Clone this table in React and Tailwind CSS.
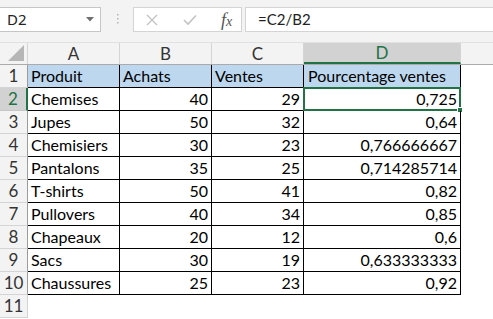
import React from "react";

const rows = [
  ["Chemises", 40, 29, "0,725"],
  ["Jupes", 50, 32, "0,64"],
  ["Chemisiers", 30, 23, "0,766666667"],
  ["Pantalons", 35, 25, "0,714285714"],
  ["T-shirts", 50, 41, "0,82"],
  ["Pullovers", 40, 34, "0,85"],
  ["Chapeaux", 20, 12, "0,6"],
  ["Sacs", 30, 19, "0,633333333"],
  ["Chaussures", 25, 23, "0,92"],
];

function TopBar() {
  return (
    <div className="flex items-start pt-[7px] h-[43px] border-b border-[#e1e1e1]">
      <div className="w-[101px] h-[25px] bg-white border border-l-0 border-[#c6c6c6] flex items-center justify-between pl-[7px] pr-[6px]">
        <span className="text-[15px] text-[#222] font-['Noto_Sans',sans-serif] leading-none">D2</span>
        <svg width="8" height="5" viewBox="0 0 8 5">
          <path d="M0 0 H8 L4 4.5 Z" fill="#6f6f6f" />
        </svg>
      </div>
      <div className="w-[32px] h-[25px] flex items-center justify-center">
        <svg width="3" height="12" viewBox="0 0 3 12">
          <rect x="1" y="0" width="1.5" height="1.5" fill="#b5b5b5" />
          <rect x="1" y="4" width="1.5" height="1.5" fill="#b5b5b5" />
          <rect x="1" y="8" width="1.5" height="1.5" fill="#b5b5b5" />
        </svg>
      </div>
      <div className="w-[109px] h-[25px] bg-white border border-[#d4d4d4] flex items-center">
        <svg className="ml-[12px]" width="12" height="12" viewBox="0 0 12 12">
          <path d="M1 1 L11 11 M11 1 L1 11" stroke="#c3c3c3" strokeWidth="1.4" />
        </svg>
        <svg className="ml-[25px]" width="14" height="12" viewBox="0 0 14 12">
          <path d="M1 6 L5 10 L13 1.5" stroke="#c3c3c3" strokeWidth="1.6" fill="none" />
        </svg>
        <span className="ml-[24px] font-['Liberation_Serif',serif] italic text-[#555] text-[18px] leading-none">
          f<span className="text-[14px]">x</span>
        </span>
      </div>
      <div className="ml-[3px] flex-1 h-[25px] bg-white border border-r-0 border-[#d4d4d4] flex items-center pl-[12px]">
        <span className="text-[15px] text-[#222] font-['Lato',sans-serif]">=C2/B2</span>
      </div>
    </div>
  );
}

function HeaderRow() {
  const cols = [
    ["A", "w-[92px]", false],
    ["B", "w-[92px]", false],
    ["C", "w-[92px]", false],
    ["D", "w-[157px]", true],
  ];
  return (
    <div className="flex h-[22px] border-b border-[#ababab]">
      <div className="w-[28px] h-full border-r border-[#d4d4d4] flex items-end justify-end pr-[3px] pb-[3px]">
        <svg width="16" height="16" viewBox="0 0 16 16">
          <path d="M16 0 V16 H0 Z" fill="#b6b6b6" />
        </svg>
      </div>
      {cols.map(([l, w, sel]) => (
        <div
          key={l}
          className={`${w} h-full flex items-center justify-center border-r border-[#d4d4d4] text-[17px] ${
            sel ? "bg-[#d2d2d2] text-[#217346] border-b-2 border-b-[#217346]" : "text-[#333]"
          }`}
        >
          {l}
        </div>
      ))}
      <div className="flex-1" />
    </div>
  );
}

function RowHead({ n, sel, last }) {
  return (
    <div
      className={`w-[28px] h-full flex items-center justify-center text-[17px] border-b ${
        sel
          ? "bg-[#d2d2d2] text-[#217346] border-r-2 border-r-[#217346] border-b-[#c6c6c6]"
          : "bg-[#f3f3f3] text-[#333] border-r border-r-[#9c9c9c] border-b-[#d4d4d4]"
      } ${last ? "border-r-[#d4d4d4]" : ""}`}
    >
      {n}
    </div>
  );
}

export default function App() {
  return (
    <div className="w-[493px] h-[319px] overflow-hidden bg-white font-['Lato',sans-serif] select-none">
      <div className="bg-[#f3f3f3]">
        <TopBar />
        <HeaderRow />
      </div>

      <div className="flex h-[23px]">
        <RowHead n={1} />
        <div className="flex bg-[#bdd7ee] border-b border-black text-[16px] text-black">
          <div className="w-[92px] border-r border-black pl-[3px] flex items-center">Produit</div>
          <div className="w-[92px] border-r border-black pl-[3px] flex items-center">Achats</div>
          <div className="w-[92px] border-r border-black pl-[3px] flex items-center">Ventes</div>
          <div className="w-[157px] border-r border-black pl-[4px] flex items-center">Pourcentage ventes</div>
        </div>
      </div>

      {rows.map((r, i) => (
        <div key={i} className="flex h-[23px]">
          <RowHead n={i + 2} sel={i === 0} />
          <div className="flex border-b border-black text-[16px] text-black">
            <div className="w-[92px] border-r border-black pl-[3px] flex items-center">{r[0]}</div>
            <div className="w-[92px] border-r border-black pr-[3px] flex items-center justify-end">{r[1]}</div>
            <div className="w-[92px] border-r border-black pr-[3px] flex items-center justify-end">{r[2]}</div>
            <div className="relative w-[157px] border-r border-black pr-[3px] flex items-center justify-end">
              {r[3]}
              {i === 0 && (
                <div className="absolute -left-[1px] -top-[1px] -right-[1px] -bottom-[1px] border-2 border-[#217346]">
                  <div className="absolute -right-[4px] -bottom-[4px] w-[6px] h-[6px] bg-[#217346] border border-white" />
                </div>
              )}
            </div>
          </div>
        </div>
      ))}

      <div className="flex h-[23px]">
        <RowHead n={11} last />
      </div>
    </div>
  );
}
